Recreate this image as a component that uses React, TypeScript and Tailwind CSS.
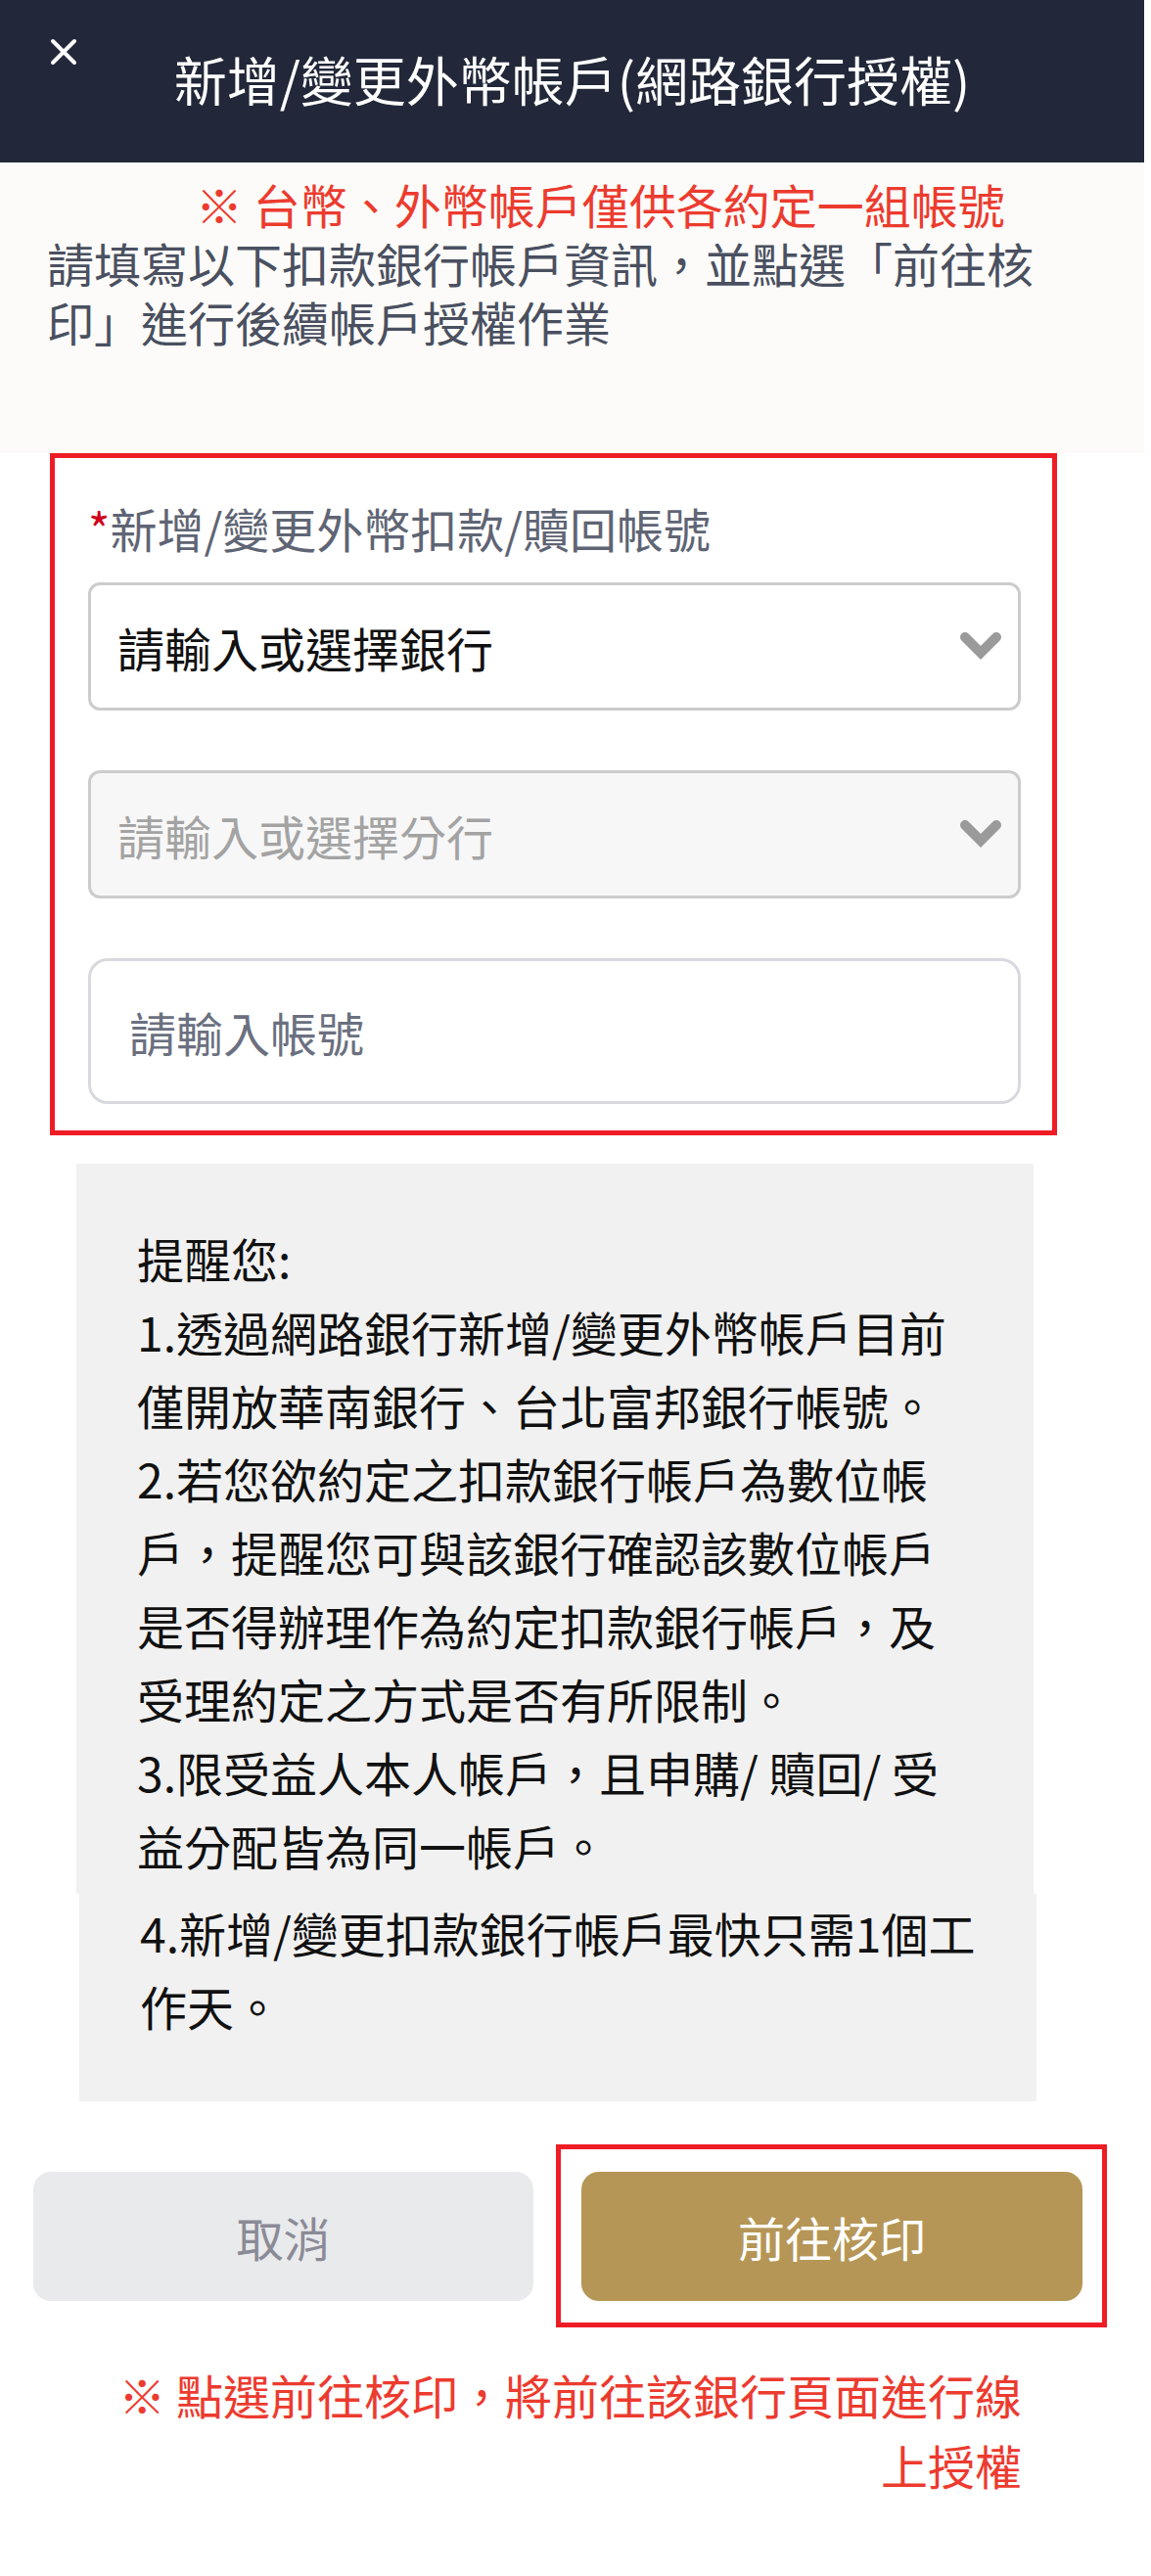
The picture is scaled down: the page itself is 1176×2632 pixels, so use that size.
import { ReactNode } from 'react';

const font = { fontFamily: '"Noto Sans CJK TC", "Noto Sans", sans-serif' };

function Chevron() {
  return (
    <svg width="42" height="30" viewBox="0 0 42 30" className="shrink-0">
      <path d="M5 5 L21 21 L37 5" fill="none" stroke="#9a9a9a" strokeWidth="10" strokeLinecap="round" strokeLinejoin="miter" />
    </svg>
  );
}

function SelectBox({ label, disabled }: { label: string; disabled?: boolean }) {
  return (
    <div
      className={`h-[131px] rounded-[12px] border-[3px] border-[#cccccc] flex items-center justify-between pl-[27px] pr-[17px] ${
        disabled ? 'bg-[#f7f7f7] text-[#a3a3a3]' : 'bg-white text-[#111111]'
      }`}
    >
      <span className="text-[48px] leading-[72px]">{label}</span>
      <Chevron />
    </div>
  );
}

function Reminder({ children, className }: { children: ReactNode; className: string }) {
  return (
    <div className={`w-[978px] bg-[#f1f1f1] pl-[62px] pr-[58px] text-[48px] leading-[75px] text-[#111111] ${className}`}>
      {children}
    </div>
  );
}

export default function App() {
  return (
    <div className="min-h-[2632px] bg-white" style={font}>
      {/* header */}
      <div className="relative w-[1169px] h-[166px] bg-[#222839] text-white">
        <button className="absolute left-[51px] top-[39px] w-[28px] h-[28px]">
          <svg width="28" height="28" viewBox="0 0 28 28">
            <path d="M3 3 L25 25 M25 3 L3 25" stroke="white" strokeWidth="4" strokeLinecap="round" />
          </svg>
        </button>
        <h1 className="pt-[45px] text-center text-[54px] leading-[72px] font-normal">
          新增/變更外幣帳戶(網路銀行授權)
        </h1>
      </div>

      {/* intro */}
      <div className="w-[1169px] h-[297px] bg-[#fcfbf9] px-[48px] pt-[12px]">
        <p className="pl-[152px] text-[48px] leading-[60px] text-[#ec3b2f]">※ 台幣、外幣帳戶僅供各約定一組帳號</p>
        <p className="w-[1030px] text-[48px] leading-[60px] text-[#4a5060]">
          請填寫以下扣款銀行帳戶資訊，並點選「前往核印」進行後續帳戶授權作業
        </p>
      </div>

      {/* form */}
      <div className="ml-[51px] w-[1029px] border-[5px] border-[#ee1c25] pl-[34px] pr-[32px] pt-[35px] pb-[27px]">
        <div className="text-[48px] leading-[72px] text-[#5f6574]">
          <span className="text-[#d0021b]">*</span>新增/變更外幣扣款/贖回帳號
        </div>
        <div className="mt-[20px]">
          <SelectBox label="請輸入或選擇銀行" />
        </div>
        <div className="mt-[61px]">
          <SelectBox label="請輸入或選擇分行" disabled />
        </div>
        <div className="mt-[61px] h-[149px] rounded-[20px] border-[3px] border-[#d8d9de] bg-white flex items-center pl-[39px]">
          <span className="text-[48px] leading-[72px] text-[#6b7080]">請輸入帳號</span>
        </div>
      </div>

      {/* reminders */}
      <Reminder className="mt-[29px] ml-[78px] pt-[59px] pb-[12px]">
        <p>提醒您:</p>
        <p>1.透過網路銀行新增/變更外幣帳戶目前僅開放華南銀行、台北富邦銀行帳號。</p>
        <p>2.若您欲約定之扣款銀行帳戶為數位帳戶，提醒您可與該銀行確認該數位帳戶是否得辦理作為約定扣款銀行帳戶，及受理約定之方式是否有所限制。</p>
        <p>3.限受益人本人帳戶，且申購/ 贖回/ 受益分配皆為同一帳戶。</p>
      </Reminder>
      <Reminder className="ml-[81px] pt-[2px] pb-[60px]">
        <p>4.新增/變更扣款銀行帳戶最快只需1個工作天。</p>
      </Reminder>

      {/* actions */}
      <div className="mt-[72px] flex px-[34px] gap-[49px]">
        <button className="w-[511px] h-[132px] rounded-[18px] bg-[#e9eaec] text-[48px] text-[#8a8b96]">取消</button>
        <div className="relative">
          <button className="w-[512px] h-[132px] rounded-[18px] bg-[#b59656] text-[48px] text-white">前往核印</button>
          <div className="absolute -left-[26px] -top-[28px] -right-[25px] -bottom-[27px] border-[5px] border-[#ee1c25] pointer-events-none" />
        </div>
      </div>

      <p className="mt-[59px] ml-[96px] w-[948px] text-right text-[48px] leading-[72px] text-[#ec3b2f]">
        ※ 點選前往核印，將前往該銀行頁面進行線上授權
      </p>
    </div>
  );
}
